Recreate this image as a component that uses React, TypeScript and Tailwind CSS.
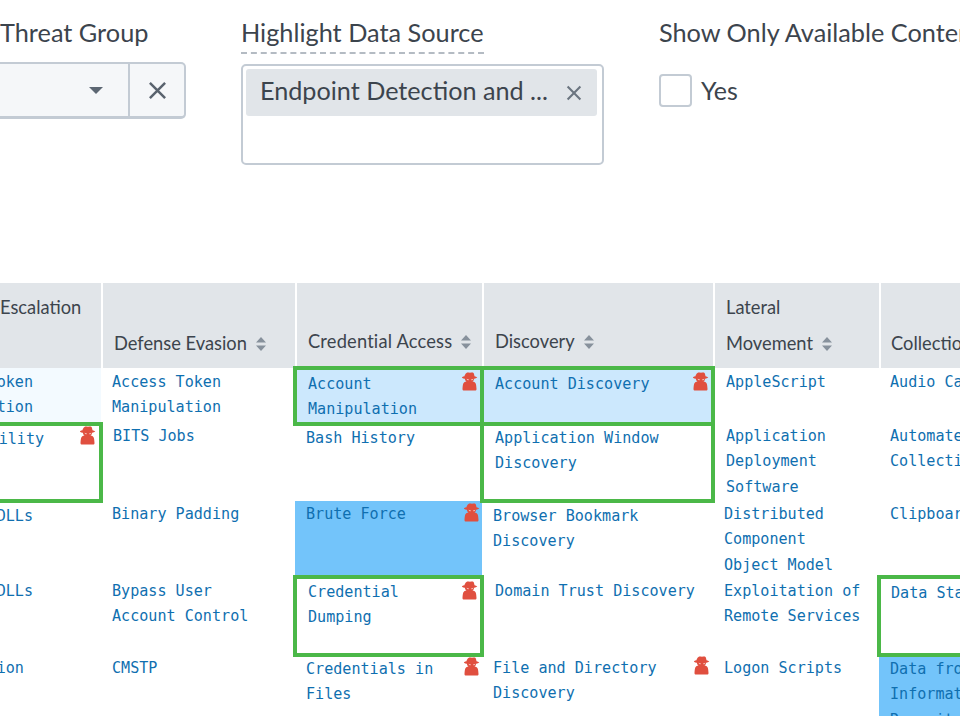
const SANS = 'font-["Lato","Noto_Sans",sans-serif]'

type Cell = {
  text: string
  fill?: 'pale' | 'light' | 'bright'
  outlined?: boolean
  spy?: boolean
  nudge?: string
  spyPos?: string
}

const HEADERS = [
  { lines: ['Escalation', ''], sort: false },
  { lines: ['Defense Evasion'], sort: true },
  { lines: ['Credential Access'], sort: true, nudge: '-translate-y-[2px] tracking-[0.18px]' },
  { lines: ['Discovery'], sort: true, nudge: '-translate-y-[2px]' },
  { lines: ['Lateral', 'Movement'], sort: true },
  { lines: ['Collection'], sort: false, nudge: '-ml-px' },
]

const ROWS: Cell[][] = [
  [
    { text: 'Access Token Manipulation', fill: 'pale' },
    { text: 'Access Token Manipulation' },
    { text: 'Account Manipulation', fill: 'light', outlined: true, spy: true, spyPos: 'top-1 right-[4px]' },
    { text: 'Account Discovery', fill: 'light', outlined: true, spy: true, spyPos: 'top-1 right-[4px]' },
    { text: 'AppleScript', nudge: 'ml-[2px]' },
    { text: 'Audio Capture' },
  ],
  [
    { text: 'Accessibility Features', outlined: true, spy: true, spyPos: 'top-[2px] right-[5px]', nudge: '-mt-[1px]' },
    { text: 'BITS Jobs', nudge: '-mt-[2px] ml-px' },
    { text: 'Bash History' },
    { text: 'Application Window Discovery', outlined: true, nudge: '-mt-[2px]' },
    { text: 'Application Deployment Software', nudge: '-mt-[2px] ml-[2px]' },
    { text: 'Automated Collection', nudge: '-mt-[2px]' },
  ],
  [
    { text: 'AppCert DLLs', nudge: 'mt-px' },
    { text: 'Binary Padding', nudge: '-mt-px' },
    { text: 'Brute Force', fill: 'bright', spy: true, spyPos: 'top-[2px] right-[2px]', nudge: '-mt-px' },
    { text: 'Browser Bookmark Discovery', nudge: 'mt-[1px]' },
    { text: 'Distributed Component Object Model', nudge: '-mt-px' },
    { text: 'Clipboard Data', nudge: '-mt-px' },
  ],
  [
    { text: 'AppInit DLLs' },
    { text: 'Bypass User Account Control' },
    { text: 'Credential Dumping', outlined: true, spy: true, spyPos: 'top-1 right-[4px]', nudge: '-mt-[1px]' },
    { text: 'Domain Trust Discovery', nudge: 'ml-[2px]' },
    { text: 'Exploitation of Remote Services' },
    { text: 'Data Staged', outlined: true, nudge: '-ml-px' },
  ],
  [
    { text: 'Application Shimming', nudge: '-mt-px' },
    { text: 'CMSTP', nudge: '-mt-px' },
    { text: 'Credentials in Files', spy: true, spyPos: 'top-[2px] right-[2px]' },
    { text: 'File and Directory Discovery', spy: true, spyPos: 'top-px right-[3px]', nudge: '-mt-px' },
    { text: 'Logon Scripts', nudge: '-mt-px' },
    { text: 'Data from Information Repositories', fill: 'bright' },
  ],
]

function SpyIcon({ className }: { className?: string }) {
  return (
    <svg viewBox="0 0 16 19" className={`h-[19px] w-4 ${className ?? ''}`} fill="#e04f3f">
      <path d="M4.500 1c.9-.9 2.200-.3 3.500-.3s2.600-.6 3.500.3c.5.6.8 2 1 3.300 1.100.2 2.100.6 2.800 1.200-.8.7-1.900 1.100-3.100 1.300-.2 1.200-.8 2.200-1.700 2.800 1.900.3 2.900 1 3.300 2.200.4 1.300.6 3.200.7 5.200 0 1-.5 1.500-1.500 1.500H2c-1 0-1.500-.5-1.500-1.500.1-2 .3-3.900.7-5.200.4-1.200 1.400-1.900 3.300-2.200C3.600 9 3 8 2.800 6.800 1.600 6.600.5 6.200-.3 5.500c.7-.6 1.700-1 2.800-1.200.2-1.300 1-2.700 2-3.300z" />
      <path d="M4.600 6.700l2.400.7-.4.9c-.9 0-1.700-.6-2-1.600zM11.400 6.700L9 7.400l.4.9c.9 0 1.700-.6 2-1.600z" fill="#f5c4bc" />
    </svg>
  )
}

function SortIcon() {
  return (
    <svg viewBox="0 0 10 14" className="ml-[9px] h-[14px] w-[10px] shrink-0" fill="#87919c">
      <path d="M5 0l5 5.500H0zM5 14L0 8.500h10z" />
    </svg>
  )
}

function CrossIcon({ className }: { className?: string }) {
  return (
    <svg viewBox="0 0 20 20" className={className} fill="none" stroke="currentColor" strokeWidth="2.600">
      <path d="M2 2l16 16M18 2L2 18" />
    </svg>
  )
}

function HeaderCell({ header, first }: { header: (typeof HEADERS)[number]; first: boolean }) {
  return (
    <div className={`flex flex-col justify-end bg-[#e1e5e9] pb-[6px] pl-[11px] ${first ? 'pl-[87px]' : 'ml-[2px]'}`}>
      {header.lines.map((line, i) => (
        <div
          key={i}
          className={`flex h-[36px] items-center text-[18.300px] text-[#3c444d] ${header.nudge ?? ''}`}
        >
          {line}
          {header.sort && i === header.lines.length - 1 && <SortIcon />}
        </div>
      ))}
    </div>
  )
}

function BodyCell({ cell }: { cell: Cell }) {
  const fills = {
    pale: 'bg-[#f3faff]',
    light: 'bg-[#cce8fd]',
    bright: 'bg-[#73c4fa]',
  }
  return (
    <div
      className={`relative pr-4 ${cell.fill ? fills[cell.fill] : ''} ${
        cell.outlined
          ? 'z-10 pl-[13px] pt-[4px] outline-[4px] -outline-offset-2 outline-[#4bb848]'
          : 'pl-[11px] pt-[2px]'
      }`}
    >
      <div className={`font-['DejaVu_Sans_Mono',monospace] text-[15.100px] leading-[25.400px] text-[#0f6fb0] ${cell.nudge ?? ''}`}>
        {cell.text}
      </div>
      {cell.spy && <SpyIcon className={`absolute ${cell.spyPos ?? ''}`} />}
    </div>
  )
}

export default function App() {
  return (
    <div className={`h-[716px] w-[960px] overflow-hidden bg-white ${SANS}`}>
      <div className="flex h-[283px] items-start pt-[17px]">
        <div className="w-[186px] shrink-0">
          <div className="h-[31px] whitespace-nowrap text-[25.300px] leading-[31px] text-[#3c444d]">Threat Group</div>
          <div className="mt-[14px] flex h-[57px] rounded-r-[5px] border-y-2 border-r-2 border-b-[3px] border-[#c3cbd4] bg-[#f5f7f9]">
            <div className="flex flex-1 items-center justify-end border-r-2 border-[#c3cbd4] pr-[25px]">
              <div className="h-0 w-0 border-x-[7px] border-t-[7px] border-x-transparent border-t-[#5c6773]" />
            </div>
            <div className="flex w-[54px] items-center justify-center text-[#59636e]">
              <CrossIcon className="h-[19px] w-[19px]" />
            </div>
          </div>
        </div>

        <div className="ml-[55px] w-[363px] shrink-0">
          <div className="w-[243px] whitespace-nowrap border-b-2 border-dashed border-[#b4bbc3] pb-[4px] text-[25.300px] leading-[31px] text-[#3c444d]">
            Highlight Data Source
          </div>
          <div className="mt-[10px] h-[101px] rounded-[5px] border-2 border-[#c3cbd4] p-[3px] pr-[5px]">
            <div className="flex h-[47px] items-center justify-between rounded-[3px] bg-[#e1e5e9] pb-1 pl-[14px] pr-[15px]">
              <span className="text-[25.200px] leading-none text-[#3c444d]">Endpoint Detection and ...</span>
              <CrossIcon className="mt-1 h-4 w-4 text-[#6b7580]" />
            </div>
          </div>
        </div>

        <div className="ml-[55px] shrink-0">
          <div className="h-[31px] whitespace-nowrap text-[25.300px] leading-[31px] text-[#3c444d]">
            Show Only Available Content
          </div>
          <div className="mt-[26px] flex items-center">
            <div className="h-[33px] w-[33px] rounded-[4px] border-2 border-[#c3cbd4] bg-white" />
            <span className="ml-[9px] text-[25px] leading-[33px] text-[#3c444d]">Yes</span>
          </div>
        </div>
      </div>

      <div className="ml-[-87px] grid w-[1136px] grid-cols-[188px_194px_187px_231px_166px_170px] grid-rows-[85px_56px_77px_76px_78px_61px]">
        {HEADERS.map((h, i) => (
          <HeaderCell key={h.lines[0]} header={h} first={i === 0} />
        ))}
        {ROWS.flat().map((cell, i) => (
          <BodyCell key={i} cell={cell} />
        ))}
      </div>
    </div>
  )
}
